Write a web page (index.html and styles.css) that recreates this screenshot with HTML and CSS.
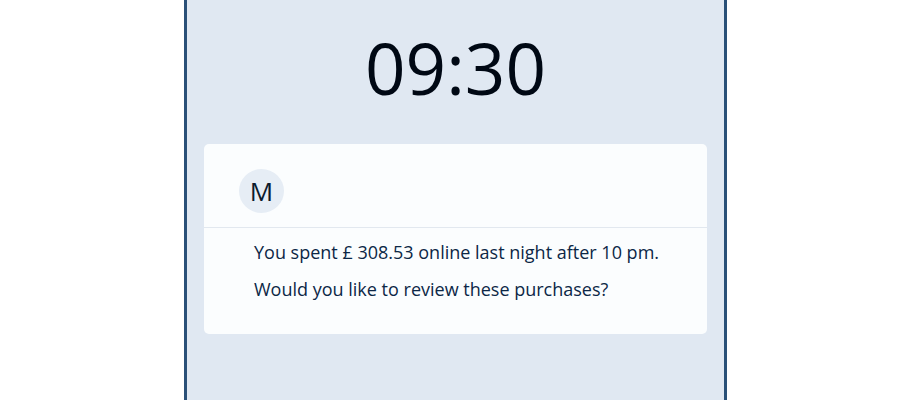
FILE: index.html
```html
<!DOCTYPE html>
<html>
<head>
<meta charset="utf-8">
<link rel="stylesheet" href="styles.css">
</head>
<body>
<div class="phone">
  <div class="clock">09:30</div>
  <div class="card">
    <div class="card-head">
      <div class="avatar">M</div>
    </div>
    <div class="card-body">
      <p class="msg">You spent £ 308.53 online last night after 10 pm.</p>
      <p class="msg">Would you like to review these purchases?</p>
    </div>
  </div>
</div>
</body>
</html>
```
FILE: styles.css
```css
html, body {
  margin: 0;
  padding: 0;
  background: #ffffff;
  height: 400px;
  overflow: hidden;
}
body {
  font-family: "Open Sans", "Noto Sans", sans-serif;
}
.phone {
  margin-left: 184px;
  width: 503px;
  height: 400px;
  border-left: 3px solid #2a5078;
  border-right: 3px solid #2a5078;
  background: #e0e8f2;
  padding: 0 17px;
  box-sizing: content-box;
}
.clock {
  text-align: center;
  font-size: 71px;
  line-height: 1;
  color: #000814;
  padding-top: 32px;
  height: 144px;
  box-sizing: border-box;
}
.card {
  background: #fbfdfe;
  border-radius: 5px;
  width: 503px;
}
.card-head {
  height: 84px;
  padding: 25px 0 0 35px;
  box-sizing: border-box;
  border-bottom: 1px solid #e2e8ef;
}
.avatar {
  width: 45px;
  height: 44px;
  border-radius: 50%;
  background: #e6edf5;
  color: #0b1a2e;
  font-size: 26px;
  line-height: 44px;
  text-align: center;
}
.card-body {
  padding: 6px 20px 0 50px;
  height: 106px;
  box-sizing: border-box;
}
.msg {
  margin: 0;
  font-size: 18px;
  line-height: 37px;
  color: #0c2746;
}
```
